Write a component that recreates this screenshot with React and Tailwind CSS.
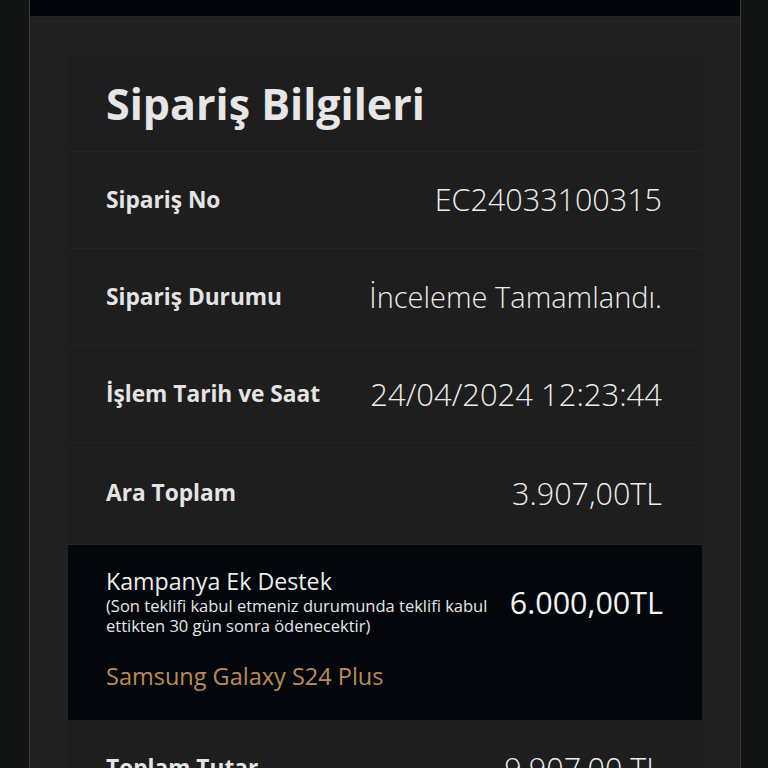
import React from "react";

const rows = [
  { label: "Sipariş No", value: "EC24033100315", size: "text-[30.5px]", h: "h-[97px]" },
  { label: "Sipariş Durumu", value: "İnceleme Tamamlandı.", size: "text-[29px]", h: "h-[97px]" },
  { label: "İşlem Tarih ve Saat", value: "24/04/2024 12:23:44", size: "text-[31px]", h: "h-[97px]" },
  { label: "Ara Toplam", value: "3.907,00TL", size: "text-[30.5px]", h: "h-[102px]" },
];

const font = { fontFamily: '"Open Sans", "Noto Sans", sans-serif' };

const InfoRow = ({ label, value, size, h }) => (
  <div className={`flex ${h} items-center justify-between border-b border-[#242424] pl-[38px] pr-[40px]`}>
    <span className="text-[22.7px] font-bold text-[#e4e4e4]">{label}</span>
    <span className={`${size} font-light text-[#ececec]`}>{value}</span>
  </div>
);

export default function App() {
  return (
    <div className="min-h-screen bg-[#131414] pl-[29px] pr-[27px]" style={font}>
      <div className="h-[768px] overflow-hidden border-l border-r border-[#3b3b3b] bg-[#202020]">
        {/* top bar */}
        <div className="h-[16px] bg-[#02050a]"></div>
        <div className="h-[6px] border-b border-[#262626] bg-[#222222]"></div>

        <div className="mx-[38px] mt-[34px] bg-[#1e1e1e]">
          <div className="flex h-[96px] items-center border-b border-[#242424] pl-[38px]">
            <h1 className="text-[43px] font-bold leading-none text-[#e6e6e6]">Sipariş Bilgileri</h1>
          </div>

          {rows.map((row) => (
            <InfoRow key={row.label} {...row} />
          ))}

          {/* campaign box */}
          <div className="h-[175px] bg-[#03060b] pl-[38px] pr-[39px] pt-[23px]">
            <div className="flex items-center justify-between">
              <div>
                <div className="text-[23.2px] leading-[26px] text-[#ececec]">Kampanya Ek Destek</div>
                <div className="mt-[2px] w-[400px] text-[16.5px] leading-[20px] text-[#e6e6e6]">
                  (Son teklifi kabul etmeniz durumunda teklifi kabul ettikten 30 gün sonra ödenecektir)
                </div>
              </div>
              <span className="text-[30.5px] font-medium leading-none text-[#f2f2f2]">6.000,00TL</span>
            </div>
            <div className="mt-[25px] text-[23.5px] leading-[30px] text-[#bb8b59]">Samsung Galaxy S24 Plus</div>
          </div>

          <div className="flex h-[97px] items-center justify-between pl-[38px] pr-[40px]">
            <span className="text-[22.7px] font-bold text-[#e4e4e4]">Toplam Tutar</span>
            <span className="text-[30.5px] font-light text-[#ececec]">9.907,00 TL</span>
          </div>
        </div>
      </div>
    </div>
  );
}
